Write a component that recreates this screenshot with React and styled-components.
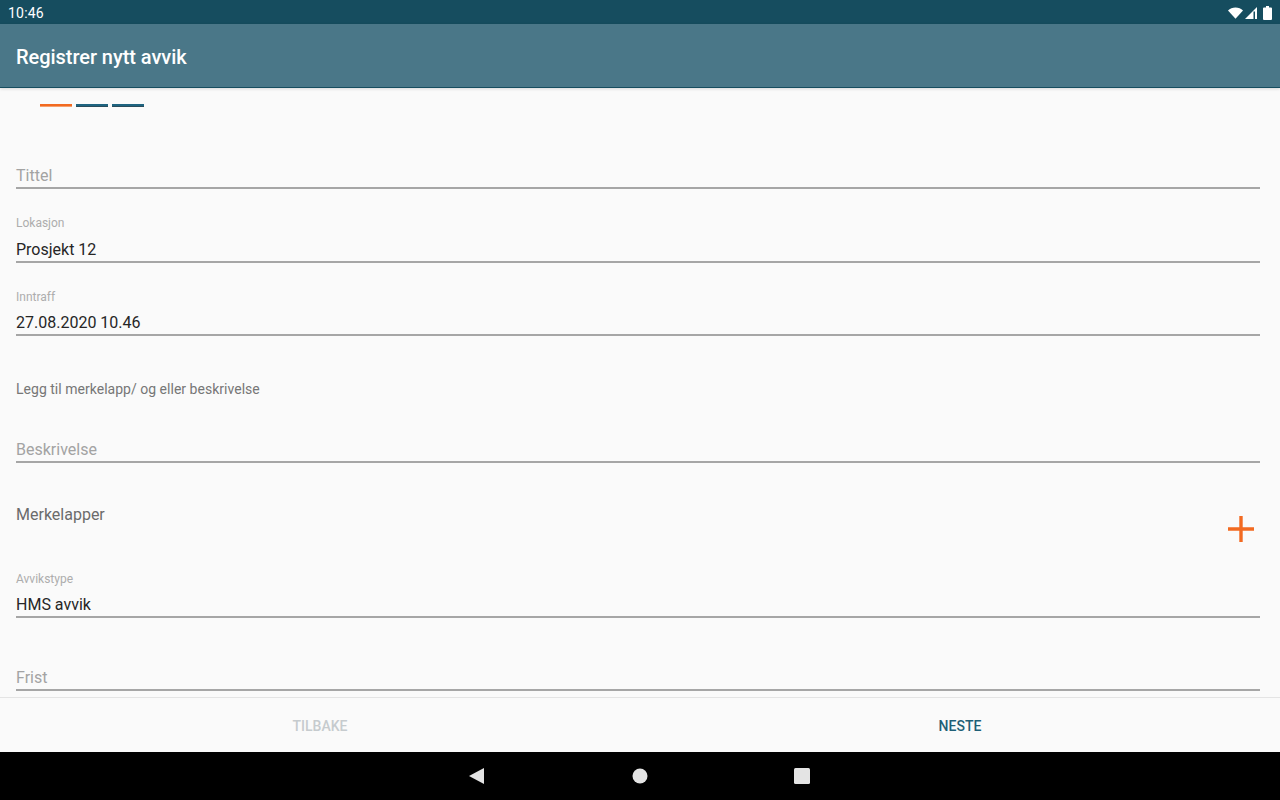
import React from 'react';
import styled, { createGlobalStyle } from 'styled-components';

const GlobalStyle = createGlobalStyle`
  html, body { margin: 0; padding: 0; background: #000; }
  body { font-family: Roboto, "Liberation Sans", sans-serif; }
`;

const Screen = styled.div`
  width: 1280px;
  height: 800px;
  display: flex;
  flex-direction: column;
  overflow: hidden;
  background: #fafafa;
`;

const StatusBar = styled.div`
  height: 24px;
  flex: none;
  background: #164d5f;
  color: #fff;
  display: flex;
  align-items: center;
  justify-content: space-between;
  padding: 1px 8px 0 8px;
  box-sizing: border-box;
  font-size: 14px;
  letter-spacing: 0.2px;
`;

const StatusIcons = styled.div`
  display: flex;
  align-items: center;
  gap: 2px;
`;

const BatterySlot = styled.span`
  display: flex;
  margin-left: 4px;
`;

const AppBar = styled.div`
  height: 64px;
  flex: none;
  box-sizing: border-box;
  background: #4a7788;
  border-bottom: 1px solid #164d5f;
  box-shadow: 0 1px 3px rgba(0, 0, 0, 0.14);
  color: #fff;
  display: flex;
  align-items: center;
  padding: 2px 0 0 16px;
  font-size: 20px;
  font-weight: 500;
  letter-spacing: -0.05px;
  position: relative;
`;

const Content = styled.div`
  flex: 1;
  min-height: 0;
  overflow: hidden;
  padding: 16px 20px 0 16px;
`;

const Steps = styled.div`
  display: flex;
  gap: 4px;
  padding-left: 24px;
  height: 3px;
`;

const Step = styled.div`
  width: 32px;
  height: 3px;
  box-sizing: border-box;
  background: ${p => (p.$active ? '#f26a21' : '#1f6480')};
  border-bottom: 1px solid ${p => (p.$active ? '#f5a06f' : '#2a4d5c')};
`;

const Field = styled.div`
  height: ${p => p.$height}px;
  margin-top: ${p => p.$top}px;
  box-sizing: border-box;
  border-bottom: 2px solid #a6a6a6;
  position: relative;
`;

const FloatLabel = styled.div`
  position: absolute;
  left: 0;
  top: 0;
  font-size: 12px;
  line-height: 14px;
  color: #adadad;
`;

const FieldText = styled.div`
  position: absolute;
  left: 0;
  bottom: 2px;
  font-size: 16px;
  line-height: 19px;
  color: ${p => (p.$hint ? '#a3a3a3' : '#262626')};
`;

const Note = styled.div`
  margin-top: 45px;
  font-size: 14px;
  line-height: 16px;
  letter-spacing: 0.02px;
  color: #767676;
`;

const TagsRow = styled.div`
  margin-top: 42px;
  height: 67px;
  display: flex;
  justify-content: space-between;
  font-size: 16px;
  color: #6b6b6b;
  line-height: 19px;
`;

const PlusButton = styled.div`
  margin: 11px -3px 0 0;
  width: 44px;
  height: 44px;
  display: flex;
  align-items: flex-start;
  justify-content: center;
`;

const Footer = styled.div`
  height: 55px;
  flex: none;
  box-sizing: border-box;
  background: #fafafa;
  border-top: 1px solid #e4e4e4;
  display: grid;
  grid-template-columns: 1fr 1fr;
`;

const FooterButton = styled.div`
  display: flex;
  align-items: center;
  justify-content: center;
  padding-top: 2px;
  font-size: 14px;
  font-weight: 500;
  color: ${p => (p.$disabled ? '#c6cbce' : '#1f5f77')};
`;

const NavBar = styled.div`
  height: 48px;
  flex: none;
  background: #000;
  display: flex;
  align-items: center;
  justify-content: center;
  gap: 146px;
  padding-right: 1px;
`;

const BackIcon = styled.svg`
  margin-right: 2px;
`;

const WifiIcon = () => (
  <svg width="15" height="12" viewBox="0 0 16 12"><path d="M0 3.2C2 1.2 4.9 0 8 0s6 1.2 8 3.2L8 12z" fill="#fff" /></svg>
);

const SignalIcon = () => (
  <svg width="12" height="12" viewBox="0 0 12 12">
    <path d="M12 0v12H0z" fill="#fff" />
    <path d="M8.5 4.5h1.5V12H8.5z" fill="#164d5f" />
  </svg>
);

const BatteryIcon = () => (
  <svg width="9" height="14" viewBox="0 0 9 14"><path d="M3 0h3v1.5h2a1 1 0 0 1 1 1V13a1 1 0 0 1-1 1H1a1 1 0 0 1-1-1V2.5a1 1 0 0 1 1-1h2z" fill="#fff" /></svg>
);

const PlusIcon = () => (
  <svg width="26" height="26" viewBox="0 0 26 26"><path d="M13 0v26M0 13h26" stroke="#f26a21" strokeWidth="3.4" /></svg>
);

const App = () => (
  <>
    <GlobalStyle />
    <Screen>
      <StatusBar>
        <span>10:46</span>
        <StatusIcons>
          <WifiIcon />
          <SignalIcon />
          <BatterySlot><BatteryIcon /></BatterySlot>
        </StatusIcons>
      </StatusBar>
      <AppBar>Registrer nytt avvik</AppBar>
      <Content>
        <Steps>
          <Step $active />
          <Step />
          <Step />
        </Steps>
        <Field $top={49} $height={33}><FieldText $hint>Tittel</FieldText></Field>
        <Field $top={27} $height={47}>
          <FloatLabel>Lokasjon</FloatLabel>
          <FieldText>Prosjekt 12</FieldText>
        </Field>
        <Field $top={27} $height={46}>
          <FloatLabel>Inntraff</FloatLabel>
          <FieldText>27.08.2020 10.46</FieldText>
        </Field>
        <Note>Legg til merkelapp/ og eller beskrivelse</Note>
        <Field $top={28} $height={38}><FieldText $hint>Beskrivelse</FieldText></Field>
        <TagsRow>
          <span>Merkelapper</span>
          <PlusButton><PlusIcon /></PlusButton>
        </TagsRow>
        <Field $top={0} $height={46}>
          <FloatLabel>Avvikstype</FloatLabel>
          <FieldText>HMS avvik</FieldText>
        </Field>
        <Field $top={40} $height={33}><FieldText $hint>Frist</FieldText></Field>
      </Content>
      <Footer>
        <FooterButton $disabled>TILBAKE</FooterButton>
        <FooterButton>NESTE</FooterButton>
      </Footer>
      <NavBar>
        <BackIcon width="15" height="16" viewBox="0 0 15 16"><path d="M15 0v16L0 8z" fill="#e4e4e4" /></BackIcon>
        <svg width="16" height="16" viewBox="0 0 16 16"><circle cx="8" cy="8" r="7.5" fill="#e4e4e4" /></svg>
        <svg width="16" height="16" viewBox="0 0 16 16"><rect width="16" height="16" rx="1.5" fill="#e4e4e4" /></svg>
      </NavBar>
    </Screen>
  </>
);

export default App;
